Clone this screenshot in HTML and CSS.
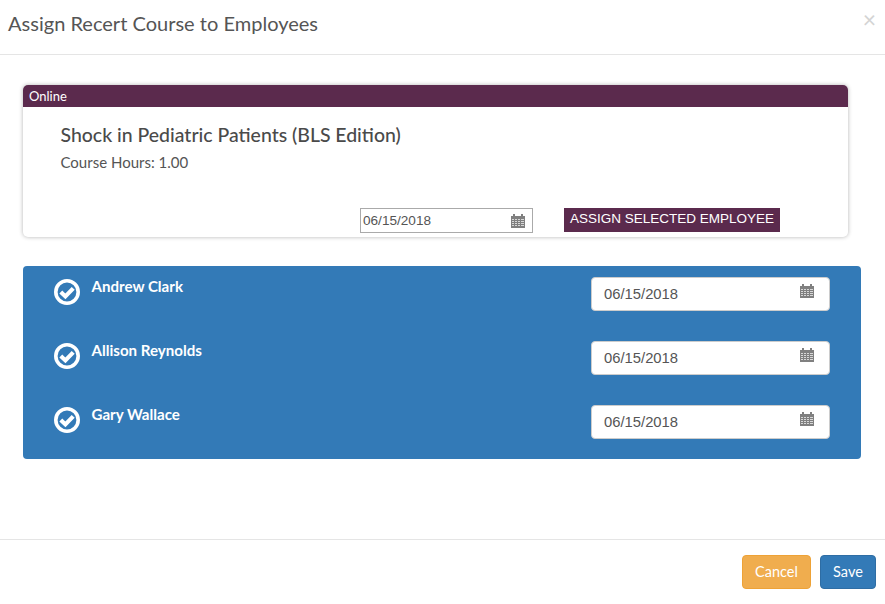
FILE: index.html
```html
<!DOCTYPE html>
<html lang="en">
<head>
<meta charset="utf-8">
<title>Assign Recert Course to Employees</title>
<link rel="stylesheet" href="styles.css">
</head>
<body>
<svg class="sprites" width="0" height="0" aria-hidden="true">
  <defs>
    <symbol id="cal" viewBox="0 0 14 15">
      <path fill="#808080" d="M0 3h2V1h2v2h6V1h2v2h2v12H0z"/>
      <path fill="#d8d8d8" d="M1 6h2v1H1zM4 6h2v1H4zM7 6h2v1H7zM10 6h3v1h-3zM1 8h2v1H1zM4 8h2v1H4zM7 8h2v1H7zM10 8h3v1h-3zM1 10h2v1H1zM4 10h2v1H4zM7 10h2v1H7zM10 10h3v1h-3zM1 12h2v1H1zM4 12h2v1H4zM7 12h2v1H7zM10 12h3v1h-3z"/>
    </symbol>
    <symbol id="check" viewBox="0 0 26 26">
      <circle cx="13" cy="13" r="11.2" fill="none" stroke="#fff" stroke-width="3.6"/>
      <path fill="none" stroke="#fff" stroke-width="4.2" d="M6.8 13l4.6 4.4 7.8-8"/>
    </symbol>
  </defs>
</svg>
<div class="modal">
  <header class="modal-head">
    <h1 class="modal-title">Assign Recert Course to Employees</h1>
    <span class="close">×</span>
  </header>
  <main class="modal-body">
    <section class="card">
      <div class="band">Online</div>
      <div class="card-main">
        <h2 class="course">Shock in Pediatric Patients (BLS Edition)</h2>
        <p class="hours">Course Hours: 1.00</p>
      </div>
      <div class="card-actions">
        <div class="plain-date"><span>06/15/2018</span><svg class="cal"><use href="#cal"/></svg></div>
        <span class="assign">ASSIGN SELECTED EMPLOYEE</span>
      </div>
    </section>
    <section class="employees">
      <div class="emp">
        <svg class="tick"><use href="#check"/></svg>
        <span class="emp-name">Andrew Clark</span>
        <div class="date"><span>06/15/2018</span><svg class="cal"><use href="#cal"/></svg></div>
      </div>
      <div class="emp">
        <svg class="tick"><use href="#check"/></svg>
        <span class="emp-name">Allison Reynolds</span>
        <div class="date"><span>06/15/2018</span><svg class="cal"><use href="#cal"/></svg></div>
      </div>
      <div class="emp">
        <svg class="tick"><use href="#check"/></svg>
        <span class="emp-name">Gary Wallace</span>
        <div class="date"><span>06/15/2018</span><svg class="cal"><use href="#cal"/></svg></div>
      </div>
    </section>
  </main>
  <footer class="modal-foot">
    <button class="btn cancel">Cancel</button>
    <button class="btn save">Save</button>
  </footer>
</div>
</body>
</html>
```
FILE: styles.css
```css
* { box-sizing: border-box; }
html, body { margin: 0; height: 100%; background: #fff; }
body { font-family: Lato, "Open Sans", sans-serif; color: #444; overflow: hidden; }
.sprites { display: block; height: 0; }
.modal { width: 885px; height: 604px; display: flex; flex-direction: column; }
.modal-head { height: 55px; border-bottom: 1px solid #e5e5e5; padding: 0 9px 0 8px; display: flex; justify-content: space-between; align-items: flex-start; }
.modal-title { margin: 10px 0 0; font-size: 20.05px; line-height: 26px; font-weight: 400; color: #555; }
.close { font-size: 23px; line-height: 24px; margin-top: 7px; color: #d4d4d4; }
.modal-body { height: 484px; padding: 30px 24px 0 23px; }
.card { width: 825px; height: 152px; background: #fff; border-radius: 5px; box-shadow: 0 0 4px rgba(0,0,0,.3); display: flex; flex-direction: column; }
.band { height: 22px; background: #5b2a4d; color: #fff; font-size: 13px; line-height: 23px; padding-left: 6px; border-radius: 5px 5px 0 0; }
.card-main { height: 101px; padding: 16px 0 0 37.5px; }
.course { margin: 0; font-size: 19.45px; line-height: 24px; font-weight: 500; color: #4a4a4a; }
.hours { margin: 5px 0 0; font-size: 15px; line-height: 20px; font-weight: 400; color: #555; }
.card-actions { display: flex; align-items: flex-start; padding-left: 337px; gap: 31px; }
.plain-date { width: 173px; height: 25px; border: 1px solid #aaa; display: flex; justify-content: space-between; align-items: center; padding: 0 7px 0 2px; font: 13.6px/23px "Liberation Sans", Arial, sans-serif; color: #555; }
.plain-date .cal { width: 14px; height: 15px; margin-top: -1px; }
.assign { width: 216px; height: 24px; background: #5b2a4d; color: #fff; font: 13.5px/22px "Liberation Sans", Arial, sans-serif; padding-left: 6px; white-space: nowrap; }
.employees { width: 838px; height: 193px; margin-top: 29px; background: #337ab7; border-radius: 4px; padding: 0 31px; display: flex; flex-direction: column; }
.emp { height: 64px; padding-top: 11px; display: flex; align-items: flex-start; color: #fff; }
.tick { width: 26px; height: 26px; flex: none; margin-top: 2px; }
.emp-name { margin-left: 11.5px; margin-top: -1px; font-size: 15.1px; line-height: 20px; font-weight: 700; flex: 1; }
.date { width: 239px; height: 34px; background: #fff; border: 1px solid #ccc; border-radius: 4px; display: flex; justify-content: space-between; align-items: flex-start; padding: 5px 15px 0 12px; font: 14.8px/20px "Liberation Sans", Arial, sans-serif; color: #555; }
.date span { padding-top: 1px; }
.date .cal { width: 14px; height: 15px; margin-top: 0; }
.modal-foot { flex: 1; border-top: 1px solid #e5e5e5; padding: 15px 9px 0 0; display: flex; justify-content: flex-end; align-items: flex-start; gap: 9px; }
.btn { height: 34px; border-radius: 4px; border: 1px solid; color: #fff; font: 14.5px/20px Lato, sans-serif; padding: 0; }
.cancel { width: 69px; background: #f0ad4e; border-color: #eea236; }
.save { width: 56px; background: #337ab7; border-color: #2e6da4; }
```
